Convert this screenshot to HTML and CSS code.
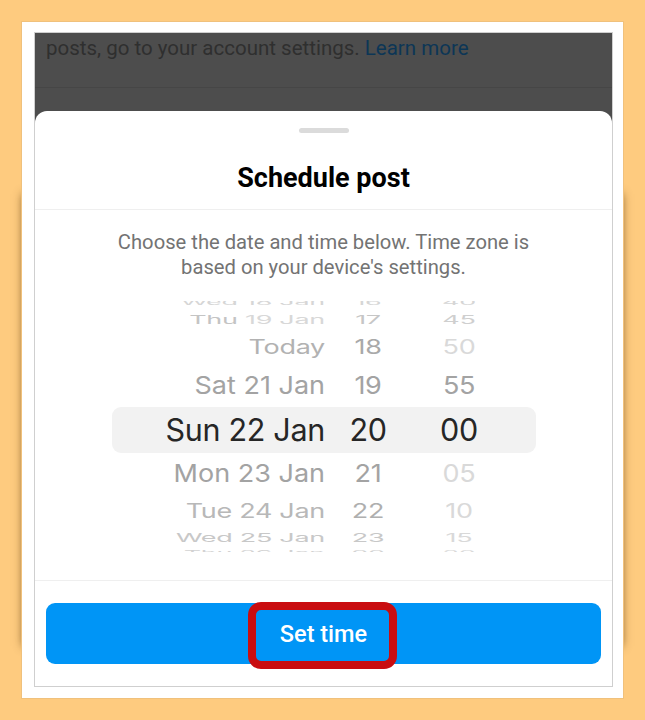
FILE: index.html
```html
<!DOCTYPE html>
<html lang="en">
<head>
<meta charset="utf-8">
<title>Schedule post</title>
<link rel="stylesheet" href="styles.css">
</head>
<body>
<div class="frame">
  <div class="screen">
    <div class="backdrop">
      <p class="bg-text">posts, go to your account settings. <span class="link">Learn more</span></p>
      <div class="bg-line"></div>
    </div>
    <div class="sheet">
      <div class="sheet-head">
        <div class="handle"></div>
        <h1 class="title">Schedule post</h1>
      </div>
      <p class="desc">Choose the date and time below. Time zone is<br>based on your device's settings.</p>
      <div class="picker">
        <div class="row r4 first"><span class="d">Wed 18 Jan</span><span class="h">16</span><span class="m">40</span></div>
        <div class="row r3"><span class="d"><span class="c3a">Thu</span> 19 Jan</span><span class="h">17</span><span class="m">45</span></div>
        <div class="row r2"><span class="d">Today</span><span class="h">18</span><span class="m light">50</span></div>
        <div class="row r1"><span class="d">Sat 21 Jan</span><span class="h">19</span><span class="m">55</span></div>
        <div class="row sel"><span class="d">Sun 22 Jan</span><span class="h">20</span><span class="m">00</span></div>
        <div class="row r1"><span class="d">Mon 23 Jan</span><span class="h">21</span><span class="m light">05</span></div>
        <div class="row r2b"><span class="d">Tue 24 Jan</span><span class="h">22</span><span class="m light">10</span></div>
        <div class="row r3b"><span class="d">Wed 25 Jan</span><span class="h">23</span><span class="m light">15</span></div>
        <div class="row r4b"><span class="d">Thu 26 Jan</span><span class="h">00</span><span class="m light">20</span></div>
      </div>
      <div class="footer">
        <button class="btn">Set time</button>
        <div class="annot"></div>
      </div>
    </div>
  </div>
</div>
</body>
</html>
```
FILE: styles.css
```css
* { box-sizing: border-box; }
html, body { margin: 0; padding: 0; }
body {
  background: #fecb7f;
  width: 645px;
  height: 720px;
  overflow: hidden;
  font-family: Roboto, "Noto Sans", sans-serif;
}
.frame {
  position: relative;
  margin: 21px 0 0 21px;
  width: 603px;
  height: 678px;
  background: #fff;
  padding: 10px 13px 13px 12px;
  border: 1px solid #f0c17c;
}
.frame::before {
  content: "";
  position: absolute;
  top: 175px;
  bottom: 55px;
  left: 4px;
  right: 4px;
  box-shadow: 0 0 9px 3px rgba(100, 65, 20, 0.85);
  z-index: -1;
}
.screen {
  width: 579px;
  height: 655px;
  border: 1px solid #cfcfcf;
  background: #4d4d4d;
  display: flex;
  flex-direction: column;
  overflow: hidden;
}
.backdrop {
  height: 78px;
  flex: none;
}
.bg-text {
  margin: 2px 0 0 11px;
  font-size: 20.5px;
  line-height: 26px;
  color: #2f2f2f;
  white-space: nowrap;
}
.link { color: #0c3656; }
.bg-line {
  margin-top: 26px;
  height: 1px;
  background: #464646;
}
.sheet {
  flex: 1;
  background: #fff;
  border-radius: 12px 12px 0 0;
  display: flex;
  flex-direction: column;
}
.sheet-head {
  height: 99px;
  border-bottom: 1px solid #efefef;
  padding-top: 17px;
  flex: none;
}
.handle {
  width: 50px;
  height: 5px;
  border-radius: 3px;
  background: #dbdbdb;
  margin: 0 auto;
}
.title {
  margin: 29px 0 0;
  text-align: center;
  font-size: 27px;
  line-height: 32px;
  font-weight: 700;
  color: #000;
}
.desc {
  margin: 20px 0 0;
  text-align: center;
  font-size: 20.2px;
  line-height: 25px;
  color: #737373;
}
.picker {
  margin-top: 21px;
  height: 251px;
  overflow: hidden;
  font-family: Inter, "Liberation Sans", sans-serif;
  flex: none;
}
.row {
  display: grid;
  grid-template-columns: 213px 86px 96px;
  margin: 0 76px 0 77px;
  font-size: 27px;
  letter-spacing: -0.3px;
}
.row span { display: block; }
.row .d { text-align: right; }
.row .h, .row .m { text-align: center; }
.row.first { margin-top: -6px; }
.r4 { height: 14px; line-height: 14px; color: #d6d6d6; }
.r4 > span { transform: scaleY(0.28); }
.r3 { height: 22px; line-height: 22px; color: #d8d8d8; }
.r3 > span { transform: scaleY(0.42); }
.c3a { color: #c4c4c4; display: inline !important; }
.r3 .h { color: #c6c6c6; }
.r3 .m { color: #cfcfcf; }
.r2 { height: 34px; line-height: 34px; color: #b2b2b2; }
.r2 > span { transform: scaleY(0.72); }
.r2 .h { color: #a9a9a9; }
.r1 { height: 42px; line-height: 42px; color: #a3a3a3; }
.r1 > span { transform: scaleY(0.9); }
.r1 .d { letter-spacing: 0; }
.sel {
  height: 46px;
  line-height: 46px;
  background: #f2f2f2;
  border-radius: 9px;
  font-size: 30.5px;
  color: #262626;
}
.r2b { height: 34px; line-height: 34px; color: #b8b8b8; }
.r2b > span { transform: scaleY(0.72); }
.r2b .h { color: #afafaf; }
.r3b { height: 18px; line-height: 18px; color: #c8c8c8; }
.r3b > span { transform: scaleY(0.45); }
.r4b { height: 12px; line-height: 12px; color: #d2d2d2; }
.r4b > span { transform: scaleY(0.28); }
.row .m.light { color: #d9d9d9; }
.footer {
  position: relative;
  border-top: 1px solid #efefef;
  margin-top: 28px;
  padding: 22px 11px 0;
  flex: 1;
}
.btn {
  display: block;
  width: 100%;
  height: 61px;
  border: none;
  border-radius: 9px;
  background: #0095f6;
  color: #fff;
  font-family: Roboto, "Noto Sans", sans-serif;
  font-size: 23.5px;
  font-weight: 500;
  padding: 0;
}
.annot {
  position: absolute;
  left: 213px;
  top: 21px;
  width: 149px;
  height: 67px;
  border: 8px solid #c90d10;
  border-radius: 13px;
}
```
